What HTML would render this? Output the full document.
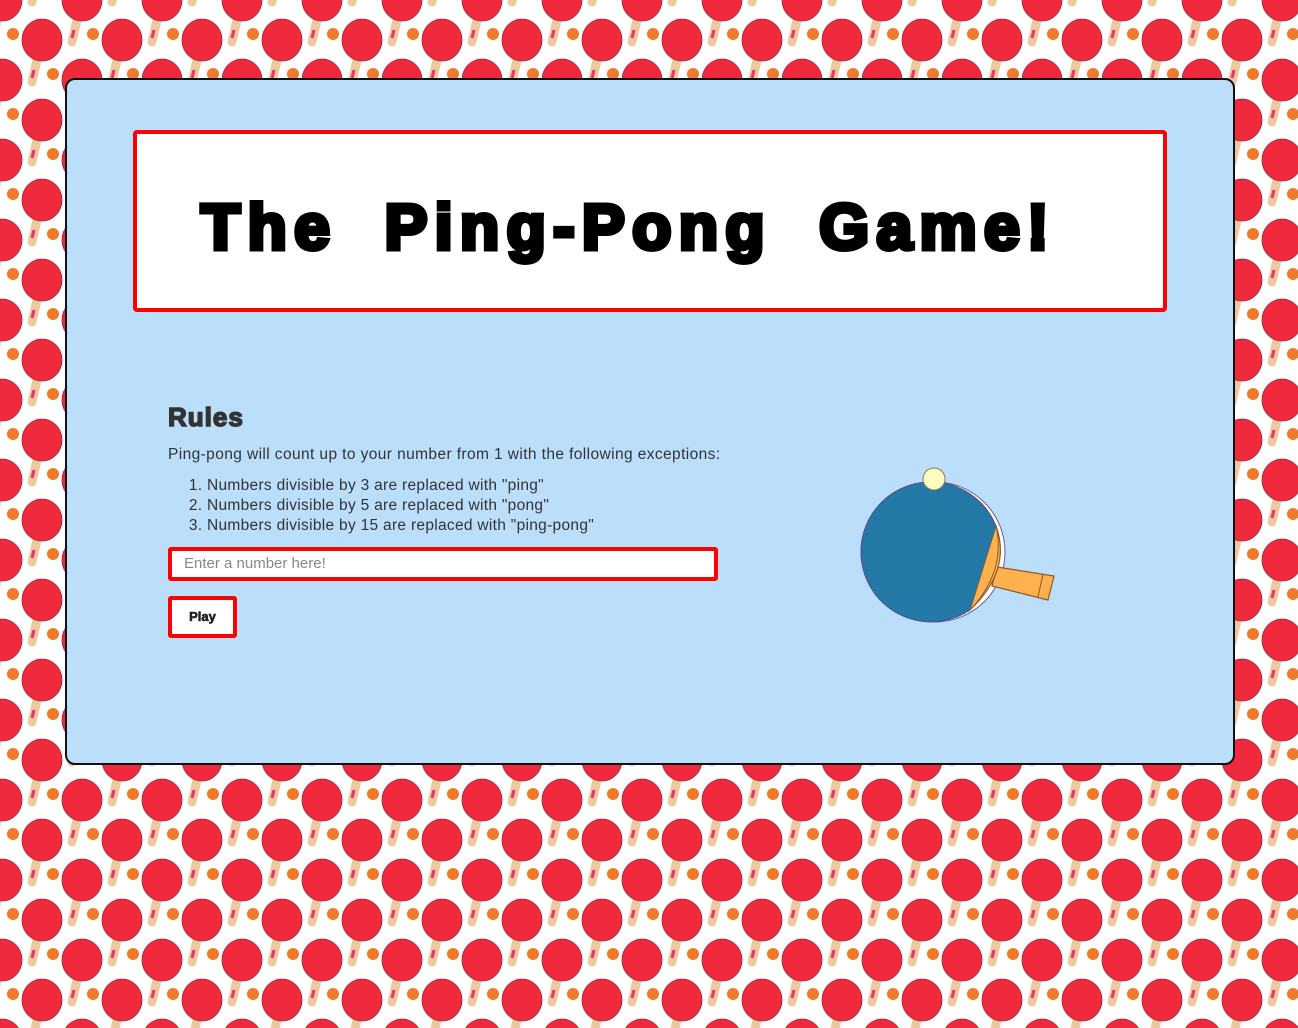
<!DOCTYPE html>
<html><head><meta charset="utf-8"><style>
html,body{margin:0;padding:0;}
body{width:1298px;height:1028px;position:relative;overflow:hidden;background:#fff;font-family:"Liberation Sans","DejaVu Sans",sans-serif;}
#bg{position:absolute;left:0;top:0;}
.card{position:absolute;left:65px;top:78px;width:1166px;height:683px;background:#bbdefb;border:2px solid #111;border-radius:10px;}
.title{position:absolute;left:66px;top:50px;width:1026px;height:174px;background:#fff;border:4px solid #f00;border-radius:4px;}
.title h1{margin:0;position:absolute;left:64px;top:56px;font:bold 64px "Liberation Sans",sans-serif;-webkit-text-stroke:5px #000;color:#000;word-spacing:22px;letter-spacing:7.5px;white-space:nowrap;}
h2{position:absolute;left:101px;top:322px;margin:0;font:bold 26px "Liberation Sans",sans-serif;color:#333;-webkit-text-stroke:1.5px #333;letter-spacing:1px;}
.p{position:absolute;left:101px;top:366px;font-size:15.5px;color:#333;letter-spacing:0.4px;}
ol{position:absolute;left:101px;top:396px;margin:0;padding-left:39px;font-size:15.5px;color:#333;line-height:20px;letter-spacing:0.3px;}
.inp{position:absolute;left:101px;top:467px;width:530px;height:26px;background:#fff;border:4px solid #f00;border-radius:3px;font-size:15px;color:#888;line-height:26px;padding-left:12px;box-sizing:content-box;}
.btn{position:absolute;left:101px;top:516px;width:61px;height:34px;background:#fff;border:4px solid #f00;border-radius:3px;font:bold 13px "Liberation Sans",sans-serif;color:#222;-webkit-text-stroke:.6px #222;text-align:center;line-height:34px;}
</style></head><body>
<svg id="bg" width="1298" height="1028">
<defs>
<g id="pd">
<line x1="-5" y1="20" x2="-10" y2="42" stroke="#ecc9a0" stroke-width="9" stroke-linecap="round"/>
<line x1="-8" y1="30" x2="-10" y2="38" stroke="#e53960" stroke-width="3"/>
<ellipse cx="0" cy="0" rx="20" ry="21" fill="#ee2a3c" stroke="#a8202e" stroke-width="0.8"/>
<circle cx="-29" cy="-6" r="6" fill="#f07a2a"/>
</g>
<pattern id="pt" width="80" height="80" patternUnits="userSpaceOnUse" x="2" y="0">
<use href="#pd" x="0" y="0"/><use href="#pd" x="80" y="0"/><use href="#pd" x="0" y="80"/><use href="#pd" x="80" y="80"/>
<use href="#pd" x="40" y="40"/><use href="#pd" x="40" y="-40"/><use href="#pd" x="-40" y="40"/><use href="#pd" x="120" y="40"/><use href="#pd" x="40" y="120"/>
</pattern>
</defs>
<rect width="1298" height="1028" fill="url(#pt)"/>
</svg>
<div class="card">
<div class="title"><h1>The Ping-Pong Game!</h1></div>
<h2>Rules</h2>
<div class="p">Ping-pong will count up to your number from 1 with the following exceptions:</div>
<ol><li>Numbers divisible by 3 are replaced with "ping"</li><li>Numbers divisible by 5 are replaced with "pong"</li><li>Numbers divisible by 15 are replaced with "ping-pong"</li></ol>
<div class="inp">Enter a number here!</div>
<div class="btn">Play</div>
<svg style="position:absolute;left:775px;top:370px" width="230" height="190" viewBox="840 450 230 190">
<circle cx="933" cy="552" r="70" fill="#fff" stroke="#6a5a9a" stroke-width="1"/>
<path d="M995 567 L1052 576 L1046 600 L990 586 Z" fill="#ffb04f" stroke="#8a5a2a" stroke-width="1.2"/>
<line x1="1041" y1="574" x2="1036" y2="597" stroke="#8a5a2a" stroke-width="1"/>
<path d="M994 526 Q1010 570 968 610 Z" fill="#ffb04f" stroke="#8a5a2a" stroke-width="1.2"/>
<path d="M994 526 Q1004 570 970 608" fill="none" stroke="#8a5a2a" stroke-width="1"/>
<path d="M994 526 A70 70 0 1 0 968 610 L994 526 Z" fill="#2378a5"/>
<path d="M994 526 A70 70 0 1 0 968 610" fill="none" stroke="#5a4a8a" stroke-width="1"/>
<circle cx="932" cy="479" r="11" fill="#fdfbbf" stroke="#8a7a5a" stroke-width="1"/>
</svg>
</div>
</body></html>
